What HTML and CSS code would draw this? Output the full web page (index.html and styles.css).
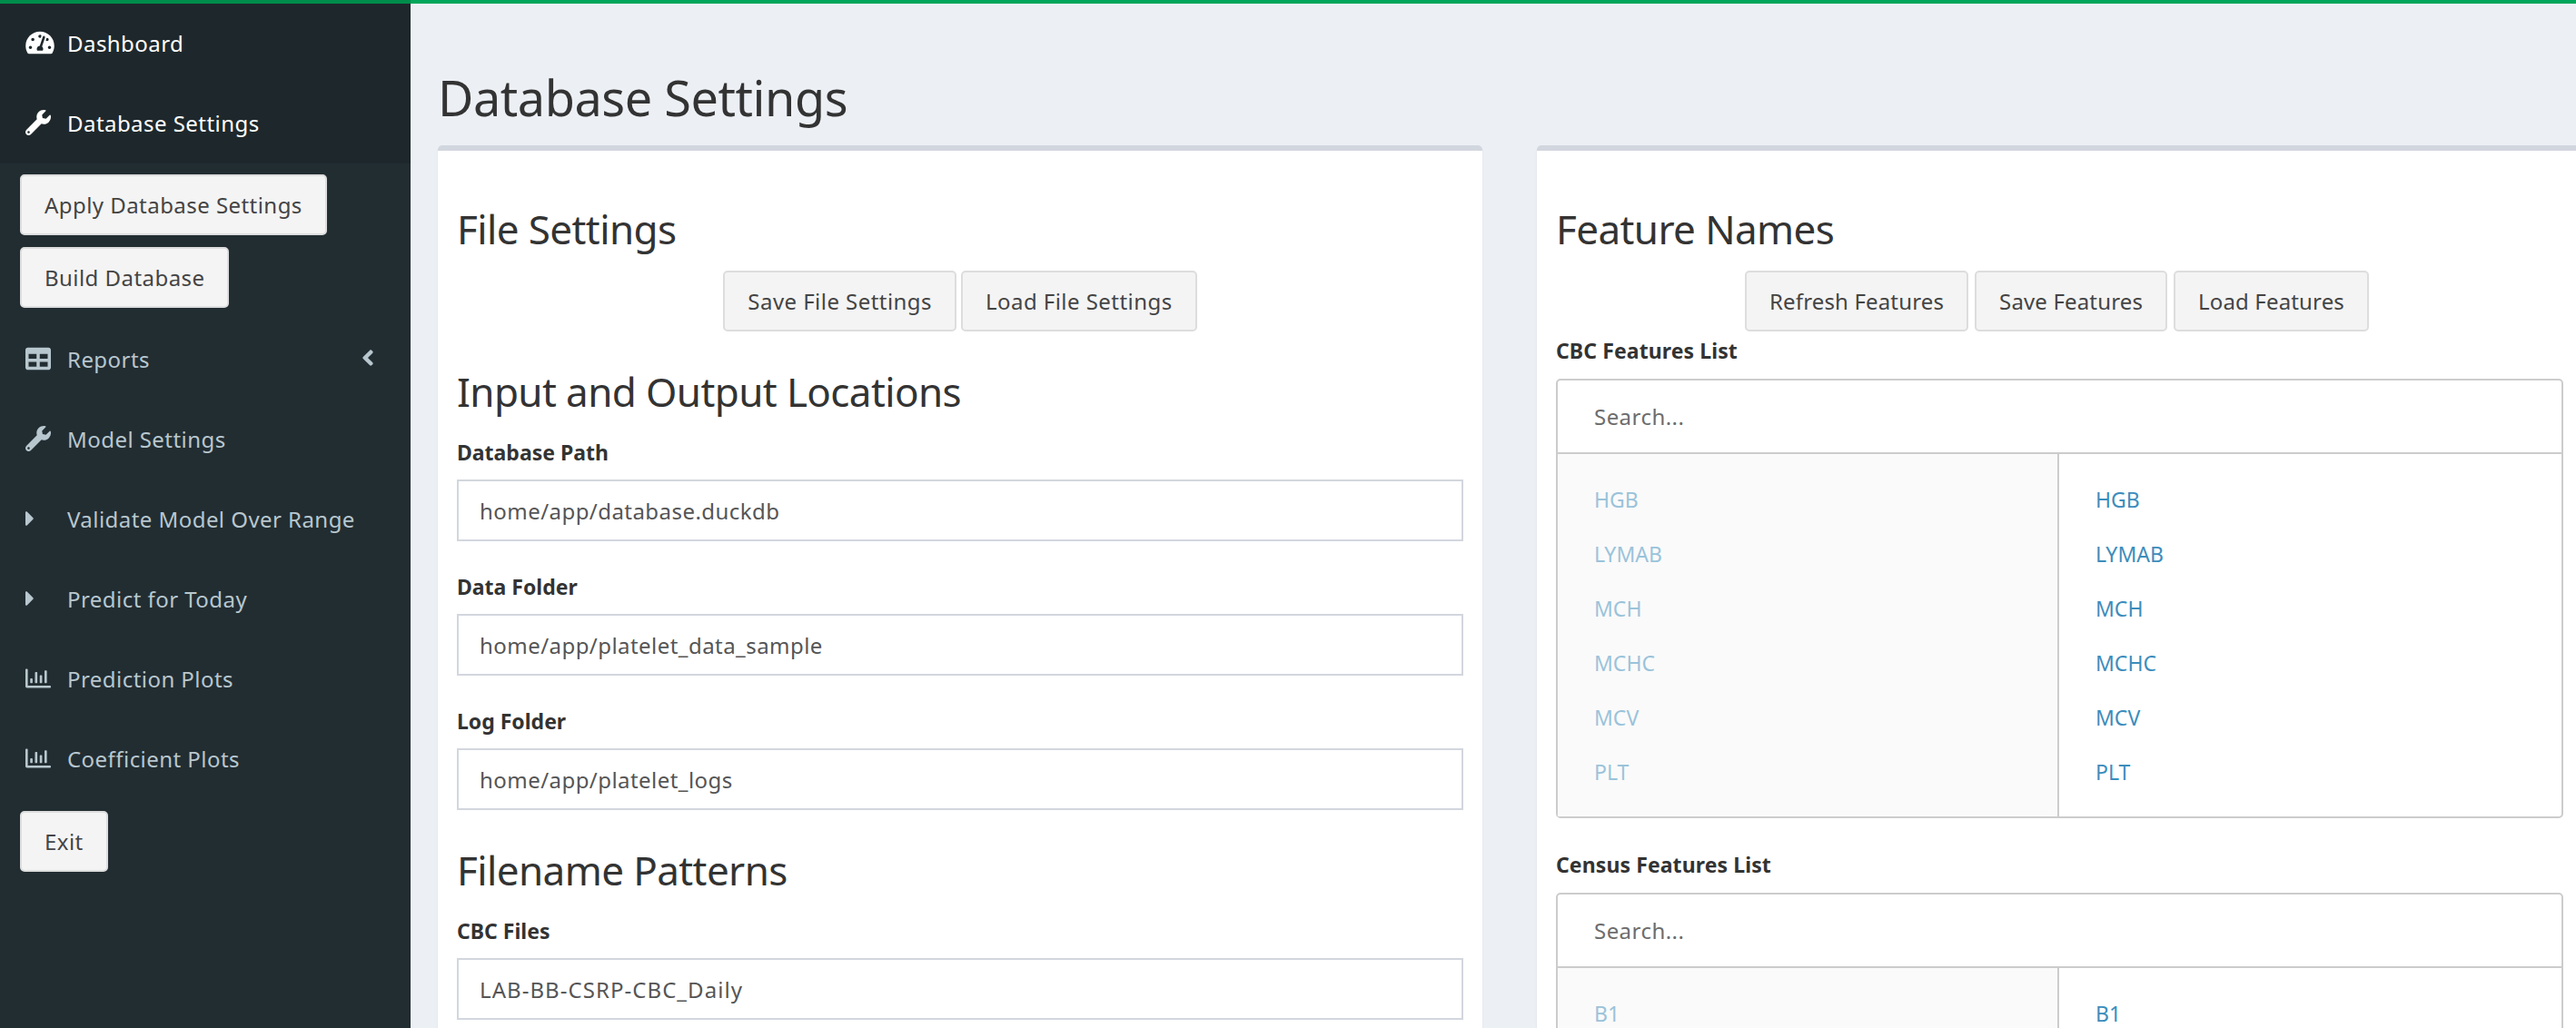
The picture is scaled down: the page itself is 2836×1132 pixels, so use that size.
FILE: index.html
```html
<!DOCTYPE html>
<html lang="en">
<head>
  <meta charset="UTF-8" />
  <title>Database Settings</title>
  <link rel="stylesheet" href="styles.css">
</head>
<body>
  <svg class="sprite" xmlns="http://www.w3.org/2000/svg">
    <symbol id="i-gauge" viewBox="0 0 576 512"><path d="M288 32C128.94 32 0 160.94 0 320c0 52.8 14.25 102.26 39.06 144.8 5.61 9.62 16.3 15.2 27.44 15.2h443c11.14 0 21.83-5.58 27.44-15.2C561.75 422.26 576 372.8 576 320c0-159.06-128.94-288-288-288zm0 64c14.71 0 26.58 10.13 30.32 23.65-1.11 2.26-2.64 4.23-3.45 6.67l-9.22 27.67c-5.13 3.49-10.97 6.01-17.64 6.01-17.67 0-32-14.33-32-32S270.33 96 288 96zM96 384c-17.67 0-32-14.33-32-32s14.33-32 32-32 32 14.33 32 32-14.33 32-32 32zm48-160c-17.67 0-32-14.33-32-32s14.33-32 32-32 32 14.33 32 32-14.33 32-32 32zm246.77-72.41l-61.33 184C343.13 347.33 352 364.54 352 384c0 11.72-3.38 22.55-8.88 32H232.88c-5.5-9.45-8.88-20.28-8.88-32 0-33.94 26.5-61.43 59.9-63.59l61.34-184.01c4.17-12.56 17.73-19.45 30.36-15.17 12.57 4.19 19.35 17.79 15.17 30.36zm14.66 57.2l15.52-46.55c3.47-1.29 7.13-2.23 11.05-2.23 17.67 0 32 14.33 32 32s-14.33 32-32 32c-11.38-.01-20.89-6.28-26.57-15.22zM480 384c-17.67 0-32-14.33-32-32s14.33-32 32-32 32 14.33 32 32-14.33 32-32 32z"/></symbol>
    <symbol id="i-wrench" viewBox="0 0 512 512"><path d="M507.73 109.1c-2.24-9.03-13.54-12.09-20.12-5.51l-74.36 74.36-67.88-11.31-11.31-67.88 74.36-74.36c6.62-6.62 3.43-17.9-5.66-20.16-47.38-11.74-99.55.91-136.58 37.93-39.64 39.64-50.55 97.1-34.05 147.2L18.74 402.76c-24.99 24.99-24.99 65.51 0 90.5 24.99 24.99 65.51 24.99 90.5 0l213.21-213.21c50.12 16.71 107.47 5.68 147.37-34.22 37.07-37.07 49.7-89.32 37.91-136.73zM64 472c-13.25 0-24-10.75-24-24 0-13.26 10.75-24 24-24s24 10.74 24 24c0 13.25-10.75 24-24 24z"/></symbol>
    <symbol id="i-table" viewBox="0 0 512 512"><path d="M464 32H48C21.49 32 0 53.49 0 80v352c0 26.51 21.49 48 48 48h416c26.51 0 48-21.49 48-48V80c0-26.51-21.49-48-48-48zM224 416H64v-96h160v96zm0-160H64v-96h160v96zm224 160H288v-96h160v96zm0-160H288v-96h160v96z"/></symbol>
    <symbol id="i-caret" viewBox="0 0 192 512"><path d="M0 384.662V127.338c0-17.818 21.543-26.741 34.142-14.142l128.662 128.662c7.81 7.81 7.81 20.474 0 28.284L34.142 398.804C21.543 411.404 0 402.48 0 384.662z"/></symbol>
    <symbol id="i-chart" viewBox="0 0 512 512"><path d="M396.8 352h22.4c6.4 0 12.8-6.4 12.8-12.8V108.8c0-6.4-6.4-12.8-12.8-12.8h-22.4c-6.4 0-12.8 6.4-12.8 12.8v230.4c0 6.4 6.4 12.8 12.8 12.8zm-192 0h22.4c6.4 0 12.8-6.4 12.8-12.8V140.8c0-6.4-6.4-12.8-12.8-12.8h-22.4c-6.4 0-12.8 6.4-12.8 12.8v198.4c0 6.4 6.4 12.8 12.8 12.8zm96 0h22.4c6.4 0 12.8-6.4 12.8-12.8V204.8c0-6.4-6.4-12.8-12.8-12.8h-22.4c-6.4 0-12.8 6.4-12.8 12.8v134.4c0 6.4 6.4 12.8 12.8 12.8zM496 400H48V80c0-8.84-7.16-16-16-16H16C7.16 64 0 71.16 0 80v336c0 17.67 14.33 32 32 32h464c8.84 0 16-7.16 16-16v-16c0-8.84-7.16-16-16-16zm-387.2-48h22.4c6.4 0 12.8-6.4 12.8-12.8v-70.4c0-6.4-6.4-12.8-12.8-12.8h-22.4c-6.4 0-12.8 6.4-12.8 12.8v70.4c0 6.4 6.4 12.8 12.8 12.8z"/></symbol>
    <symbol id="i-angle" viewBox="0 0 256 512"><path d="M31.7 239l136-136c9.4-9.4 24.6-9.4 33.9 0l22.6 22.6c9.4 9.4 9.4 24.6 0 33.9L127.9 256l96.4 96.4c9.4 9.4 9.4 24.6 0 33.9L201.7 409c-9.4 9.4-24.6 9.4-33.9 0l-136-136c-9.5-9.4-9.5-24.6-.1-34z"/></symbol>
  </svg>

  <div class="topbar"><div class="topbar-left"></div></div>

  <div class="wrapper">
    <aside class="sidebar">
      <a class="menu-item active"><svg class="ico ico-gauge"><use href="#i-gauge"/></svg>Dashboard</a>
      <a class="menu-item active"><svg class="ico"><use href="#i-wrench"/></svg>Database Settings</a>
      <button class="btn side-btn first">Apply Database Settings</button>
      <button class="btn side-btn">Build Database</button>
      <a class="menu-item after-btn"><svg class="ico"><use href="#i-table"/></svg>Reports<svg class="angle"><use href="#i-angle"/></svg></a>
      <a class="menu-item"><svg class="ico"><use href="#i-wrench"/></svg>Model Settings</a>
      <a class="menu-item"><svg class="ico ico-caret"><use href="#i-caret"/></svg>Validate Model Over Range</a>
      <a class="menu-item"><svg class="ico ico-caret"><use href="#i-caret"/></svg>Predict for Today</a>
      <a class="menu-item"><svg class="ico"><use href="#i-chart"/></svg>Prediction Plots</a>
      <a class="menu-item"><svg class="ico"><use href="#i-chart"/></svg>Coefficient Plots</a>
      <button class="btn side-btn">Exit</button>
    </aside>

    <main class="content">
      <h1>Database Settings</h1>
      <div class="columns">
        <section class="box">
          <h3>File Settings</h3>
          <div class="btn-row">
            <button class="btn">Save File Settings</button>
            <button class="btn">Load File Settings</button>
          </div>
          <h3 class="sub">Input and Output Locations</h3>
          <div class="field">
            <label>Database Path</label>
            <input type="text" value="home/app/database.duckdb" />
          </div>
          <div class="field">
            <label>Data Folder</label>
            <input type="text" value="home/app/platelet_data_sample" />
          </div>
          <div class="field">
            <label>Log Folder</label>
            <input type="text" value="home/app/platelet_logs" />
          </div>
          <h3 class="sub">Filename Patterns</h3>
          <div class="field">
            <label>CBC Files</label>
            <input class="caps" type="text" value="LAB-BB-CSRP-CBC_Daily" />
          </div>
        </section>

        <section class="box">
          <h3>Feature Names</h3>
          <div class="btn-row tight">
            <button class="btn">Refresh Features</button>
            <button class="btn">Save Features</button>
            <button class="btn">Load Features</button>
          </div>
          <label class="list-label">CBC Features List</label>
          <div class="multi">
            <input class="multi-search" type="text" placeholder="Search..." />
            <div class="multi-cols">
              <ul class="multi-col from">
                <li>HGB</li><li>LYMAB</li><li>MCH</li><li>MCHC</li><li>MCV</li><li>PLT</li>
              </ul>
              <ul class="multi-col to">
                <li>HGB</li><li>LYMAB</li><li>MCH</li><li>MCHC</li><li>MCV</li><li>PLT</li>
              </ul>
            </div>
          </div>
          <label class="list-label census">Census Features List</label>
          <div class="multi">
            <input class="multi-search" type="text" placeholder="Search..." />
            <div class="multi-cols">
              <ul class="multi-col from">
                <li>B1</li>
              </ul>
              <ul class="multi-col to">
                <li>B1</li>
              </ul>
            </div>
          </div>
        </section>
      </div>
    </main>
  </div>
</body>
</html>
```

FILE: styles.css
```css
* {
  box-sizing: border-box;
}

html, body {
  height: 100%;
  margin: 0;
  overflow: hidden;
}

body {
  display: flex;
  flex-direction: column;
  font-family: "Noto Sans", sans-serif;
  font-size: 24px;
  letter-spacing: 0.45px;
  color: #333;
  background: #ecf0f5;
}

.sprite {
  display: none;
}

.topbar {
  height: 4px;
  flex: none;
  background: #00a65a;
}

.topbar-left {
  width: 452px;
  height: 4px;
  background: #008d4c;
}

.wrapper {
  display: flex;
  flex: 1;
  min-height: 0;
}

/* sidebar */
.sidebar {
  width: 452px;
  flex: none;
  background: #222d32;
}

.menu-item {
  display: flex;
  align-items: center;
  height: 88px;
  padding: 0 0 2px 28px;
  color: #b8c7ce;
}

.menu-item.active {
  background: #1e282c;
  color: #fff;
}

.ico {
  width: 28px;
  height: 28px;
  margin-right: 18px;
  flex: none;
  fill: currentColor;
}

.ico-gauge {
  width: 32px;
  margin-right: 14px;
}

.ico-caret {
  width: 10px;
  margin-right: 36px;
}

.angle {
  width: 14px;
  height: 28px;
  margin: -3px 40px 0 auto;
  fill: currentColor;
}

.btn {
  height: 67px;
  padding: 0 25px;
  border: 2px solid #ddd;
  border-radius: 5px;
  background: #f4f4f4;
  color: #444;
  font-family: inherit;
  font-size: 24px;
  letter-spacing: inherit;
}

.side-btn {
  display: block;
  margin: 13px 0 0 22px;
}

.side-btn.first {
  margin-top: 12px;
}

.after-btn {
  margin-top: 13px;
}

/* main area */
.content {
  flex: 1;
  min-width: 0;
  padding-left: 30px;
}

h1 {
  height: 156px;
  margin: 0;
  padding-top: 71px;
  font-size: 54px;
  font-weight: 400;
  letter-spacing: -0.45px;
  line-height: 64px;
}

.columns {
  display: grid;
  grid-template-columns: 1150px 1151px;
  gap: 60px;
}

.box {
  border-top: 6px solid #d2d6de;
  border-radius: 5px;
  background: #fff;
  padding: 56px 21px 0;
  height: 1200px;
  box-shadow: 0 2px 2px rgba(0, 0, 0, 0.1);
}

h3 {
  height: 60px;
  margin: 0 0 16px;
  font-size: 44px;
  font-weight: 400;
  letter-spacing: -0.6px;
  line-height: 60px;
}

h3.sub {
  margin: 36px 0 22px;
}

.btn-row {
  display: flex;
  justify-content: center;
  gap: 5px;
}

.btn-row.tight {
  gap: 7px;
  padding-right: 6px;
  letter-spacing: 0.15px;
}

.field {
  margin-bottom: 35px;
}

.field label {
  display: block;
  height: 30px;
  margin-bottom: 15px;
  font-size: 23px;
  font-weight: 700;
  letter-spacing: 0;
  line-height: 30px;
}

.field input {
  display: block;
  width: 100%;
  height: 68px;
  padding: 0 23px;
  border: 2px solid #d2d6de;
  color: #555;
  font-family: inherit;
  font-size: 24px;
  letter-spacing: inherit;
  outline: none;
}

.field input.caps {
  letter-spacing: 1.05px;
}

.list-label {
  display: block;
  height: 30px;
  margin: 6px 0 16px;
  font-size: 23px;
  font-weight: 700;
  letter-spacing: 0.1px;
  line-height: 30px;
}

.list-label.census {
  margin-top: 36px;
}

.multi {
  border: 2px solid #ccc;
  border-radius: 5px;
}

.multi-search {
  display: block;
  width: 100%;
  height: 79px;
  padding: 0 40px;
  border: 0;
  background: transparent;
  font-family: inherit;
  font-size: 24px;
  letter-spacing: inherit;
  outline: none;
}

.multi-search::placeholder {
  color: #6d6d6d;
}

.multi-cols {
  display: grid;
  grid-template-columns: 552px 1fr;
  border-top: 2px solid #ccc;
}

.multi-col {
  margin: 0;
  padding: 20px 0 19px 40px;
  list-style: none;
  font-size: 23px;
  letter-spacing: 0;
  color: #3c8dbc;
}

.multi-col li {
  height: 60px;
  line-height: 60px;
}

.multi-col.from {
  background: #fafafa;
  border-right: 2px solid #ccc;
}

.multi-col.from li {
  opacity: 0.5;
}
```
